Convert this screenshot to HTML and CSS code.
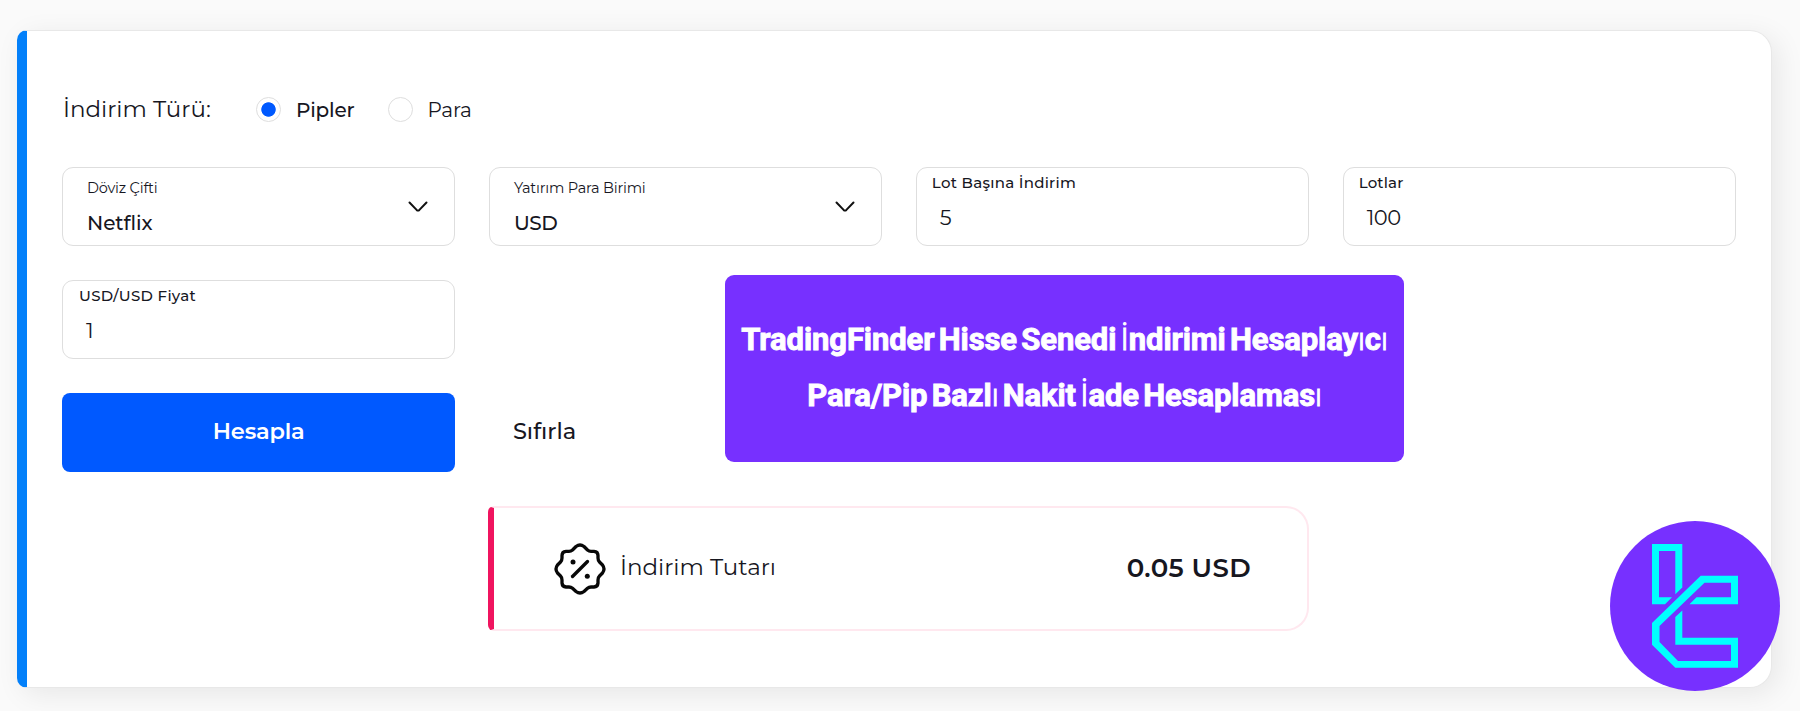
FILE: index.html
```html
<!DOCTYPE html>
<html lang="tr">
<head>
<meta charset="utf-8">
<title>İndirim Hesaplayıcı</title>
<link rel="stylesheet" href="styles.css">
</head>
<body>
<main class="card">
  <div class="type-row">
    <span class="type-title">İndirim Türü:</span>
    <label class="option option-on"><span class="radio radio-on"></span><span class="option-text">Pipler</span></label>
    <label class="option"><span class="radio"></span><span class="option-text">Para</span></label>
  </div>
  <div class="grid">
    <div class="field select">
      <div class="select-text"><span class="select-label">Döviz Çifti</span><span class="select-value">Netflix</span></div>
      <svg class="chevron" viewBox="0 0 20 12"><path d="M1.500 1.500 8.600 8.900Q10 10.200 11.400 8.900L18.500 1.500"/></svg>
    </div>
    <div class="field select">
      <div class="select-text"><span class="select-label">Yatırım Para Birimi</span><span class="select-value usd">USD</span></div>
      <svg class="chevron" viewBox="0 0 20 12"><path d="M1.500 1.500 8.600 8.900Q10 10.200 11.400 8.900L18.500 1.500"/></svg>
    </div>
    <div class="field input"><span class="input-label">Lot Başına İndirim</span><span class="input-value">5</span></div>
    <div class="field input"><span class="input-label lots">Lotlar</span><span class="input-value">100</span></div>
    <div class="field input"><span class="input-label price">USD/USD Fiyat</span><span class="input-value">1</span></div>
    <button class="submit">Hesapla</button>
    <button class="reset">Sıfırla</button>
  </div>
  <section class="result">
    <svg class="badge" viewBox="0 0 52 52">
      <path d="M22 3.500Q26 .5 30 3.500L33.500 7Q35 8.300 37 8.300H40Q44 8.500 44 12.500V15Q44 17.500 45.500 19L48.500 22Q51.500 26 48.500 30L45.500 33Q44 34.500 44 37V40Q43.700 43.700 40 44H37Q35 44 33.500 45.300L30 48.500Q26 51.500 22 48.500L18.500 45.300Q17 44 15 44H12Q8.300 43.700 8 40V37Q8 34.500 6.500 33L3.500 30Q.5 26 3.500 22L6.500 19Q8 17.500 8 15V12.500Q8 8.500 12 8.300H15Q17 8.300 18.500 7Z"/>
      <path d="M18.500 33.500 33.500 18.500"/>
      <circle cx="19" cy="19" r="2.500"/><circle cx="33.300" cy="33.300" r="2.500"/>
    </svg>
    <span class="result-label">İndirim Tutarı</span>
    <strong class="result-value">0.05 USD</strong>
  </section>
</main>
<aside class="banner">
  <p>TradingFinder Hisse Senedi <i>İ</i>ndirimi Hesaplay<i>ı</i>c<i>ı</i></p>
  <p>Para/Pip Bazl<i>ı</i> Nakit <i>İ</i>ade Hesaplamas<i>ı</i></p>
</aside>
<svg class="logo" viewBox="0 0 170 170">
  <circle cx="85" cy="85" r="85" fill="#7730ff"/>
  <g fill="#00ffff">
    <path d="M42 23H72.300V66.500L65.300 73.300V30H49V76.300H62L55 83.300H42Z"/>
    <path d="M90.700 54.700H128V83.300H79.500L86.500 76.300H121V61.700H94.500L49.500 105V121L68 140H121V123.700H65.300V96L72.300 89.500V116.700H128V146.700H65.300L42 123.700V102Z"/>
  </g>
</svg>
</body>
</html>
```
FILE: styles.css
```css
* { box-sizing: border-box; }
body {
  margin: 0;
  width: 1800px;
  height: 711px;
  padding: 30px 0 0 17px;
  overflow: hidden;
  background: #fafafa;
  color: #17171f;
  font-family: Montserrat, Inter, sans-serif;
}
.card {
  width: 1755px;
  height: 658px;
  padding: 58px 35px 0 35px;
  background: #fff;
  border: 1px solid #e8e8e8;
  border-left: 10px solid #0380fa;
  border-radius: 10px 22px 22px 10px;
  box-shadow: 6px 6px 28px rgba(0, 0, 0, .08);
}
.type-row { display: flex; align-items: center; height: 40px; white-space: nowrap; }
.type-title { width: 194px; padding-left: 1px; font-size: 23px; }
.option { display: flex; align-items: center; width: 131.500px; gap: 15px; font-size: 20px; letter-spacing: -.2px; }
.option-text { padding-top: 2px; }
.option-on { font-weight: 500; }
.radio { width: 25px; height: 25px; border: 1.500px solid #dedede; border-radius: 50%; background: #fff; }
.radio-on { background: radial-gradient(circle, #0059ff 6.800px, #fff 7.600px); }
.grid {
  display: grid;
  grid-template-columns: repeat(4, 1fr);
  column-gap: 33.600px;
  row-gap: 34px;
  margin-top: 38px;
}
.field { display: flex; height: 79px; border: 1.500px solid #dedede; border-radius: 11px; }
.select { align-items: center; justify-content: space-between; padding: 0 26px 0 24px; }
.select-text, .input { display: flex; flex-direction: column; align-items: flex-start; white-space: nowrap; }
.select-label { padding-top: 1px; font-size: 14.500px; line-height: 20px; letter-spacing: -.2px; }
.select-value { margin: 13px 0 1px; font-size: 20px; line-height: 24px; font-weight: 500; letter-spacing: -.1px; }
.usd { letter-spacing: -.4px; }
.chevron { width: 20px; height: 12px; margin-top: 1px; fill: none; stroke: #111; stroke-width: 2; stroke-linecap: round; }
.input { padding: 5px 0 0 15px; }
.input-label { font-size: 15px; line-height: 20px; font-weight: 500; letter-spacing: .28px; }
.lots { letter-spacing: .15px; }
.price { padding-left: 1px; letter-spacing: .3px; }
.input-value { margin: 13px 0 0 8px; font-size: 21px; line-height: 24px; letter-spacing: -.4px; }
.submit, .reset { height: 79px; border: 0; padding: 0 0 4px; font: 600 22.500px Montserrat, Inter, sans-serif; }
.submit { grid-column: 1; border-radius: 8px; background: #0059ff; color: #fff; letter-spacing: -.2px; }
.reset { justify-self: start; padding-left: 24px; background: none; color: #17171f; font-weight: 500; }
.result {
  display: flex;
  align-items: center;
  width: 821px;
  height: 125px;
  margin: 34px 0 0 426px;
  padding: 0 56px 0 60px;
  border: 2px solid #ffe8ef;
  border-left: 6px solid #f0145f;
  border-radius: 6px 23px 23px 6px;
}
.badge { width: 52px; height: 52px; fill: none; stroke: #080808; stroke-width: 3.300; stroke-linecap: round; stroke-linejoin: round; }
.badge circle { fill: #080808; stroke: none; }
.result-label { margin-left: 14px; padding-bottom: 3px; font-size: 23px; }
.result-value { margin-left: auto; padding-bottom: 2px; font-size: 26px; font-weight: 600; letter-spacing: .35px; }
.banner {
  position: absolute;
  left: 725px;
  top: 275px;
  width: 679px;
  height: 187px;
  padding-top: 37px;
  border-radius: 9px;
  background: #7730ff;
  color: #fff;
  font: 700 31px/56px Roboto, sans-serif;
  letter-spacing: -.1px;
  word-spacing: -3.300px;
  -webkit-text-stroke: .9px #fff;
  text-align: center;
  white-space: nowrap;
}
.banner p { margin: 0; }
.banner i { font-style: normal; font-weight: 300; }
.logo { position: absolute; left: 1610px; top: 521px; width: 170px; height: 170px; }
```
